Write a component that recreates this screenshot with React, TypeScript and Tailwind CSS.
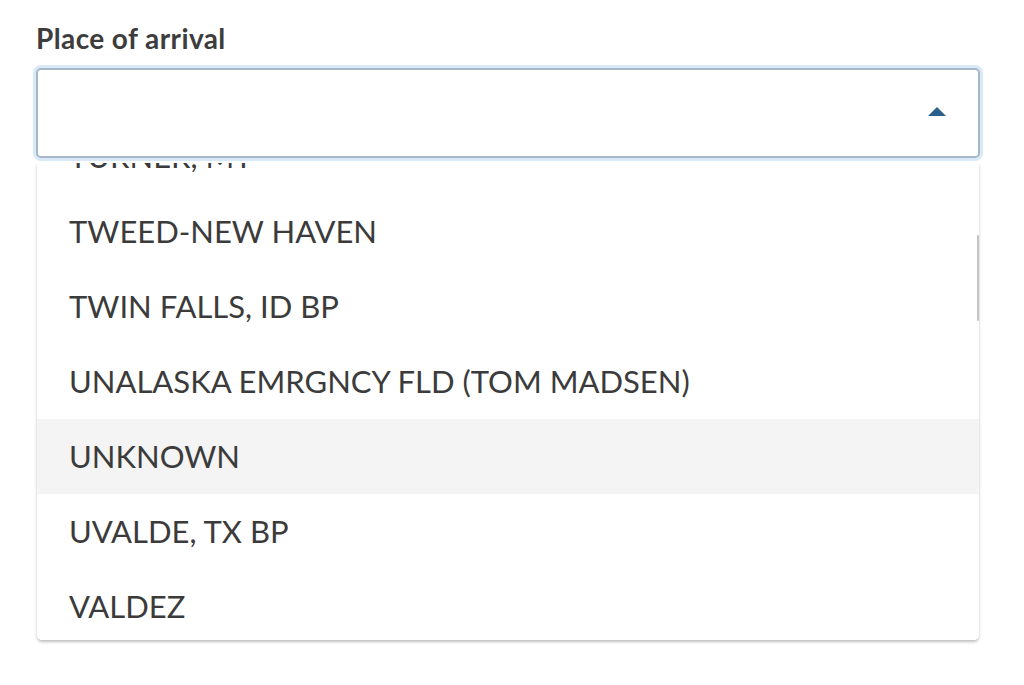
import { useState } from "react";

const places = [
  "TURNER, MT",
  "TWEED-NEW HAVEN",
  "TWIN FALLS, ID BP",
  "UNALASKA EMRGNCY FLD (TOM MADSEN)",
  "UNKNOWN",
  "UVALDE, TX BP",
  "VALDEZ",
];

export default function App() {
  const [hovered] = useState("UNKNOWN");

  return (
    <div className="min-h-screen bg-white px-[36px] pt-[22px] font-['Lato','Open_Sans',sans-serif] text-[#3b3b3b]">
      <label className="block text-[28px] font-bold leading-[32px] tracking-[0.4px] text-[#3d3d3d]">
        Place of arrival
      </label>

      <div className="relative mt-[14px] w-[944px]">
        <button
          type="button"
          className="flex h-[90px] w-full items-center justify-end rounded-[5px] border-2 border-[#a7b9c9] bg-white pb-[4px] pr-[32px] shadow-[0_0_0_3px_rgba(191,219,242,0.6)]"
        >
          <svg width="18" height="9" viewBox="0 0 18 9" aria-hidden="true">
            <path d="M9 0 L18 9 L0 9 Z" fill="#2b5f8c" />
          </svg>
        </button>

        <div className="absolute left-[1px] top-[95px] h-[477px] w-[942px] overflow-hidden rounded-b-[5px] bg-white shadow-[0_2px_3px_rgba(0,0,0,0.25)]">
          <ul className="-mt-[44px]">
            {places.map((place) => (
              <li
                key={place}
                className={
                  "flex h-[75px] items-center px-[32px] text-[31px] " +
                  (place === hovered ? "bg-[#f4f4f4]" : "bg-white")
                }
              >
                {place}
              </li>
            ))}
          </ul>
          <div className="absolute right-0 top-[72px] h-[86px] w-[2px] rounded bg-[#c4c4c4]" />
        </div>
      </div>
    </div>
  );
}
